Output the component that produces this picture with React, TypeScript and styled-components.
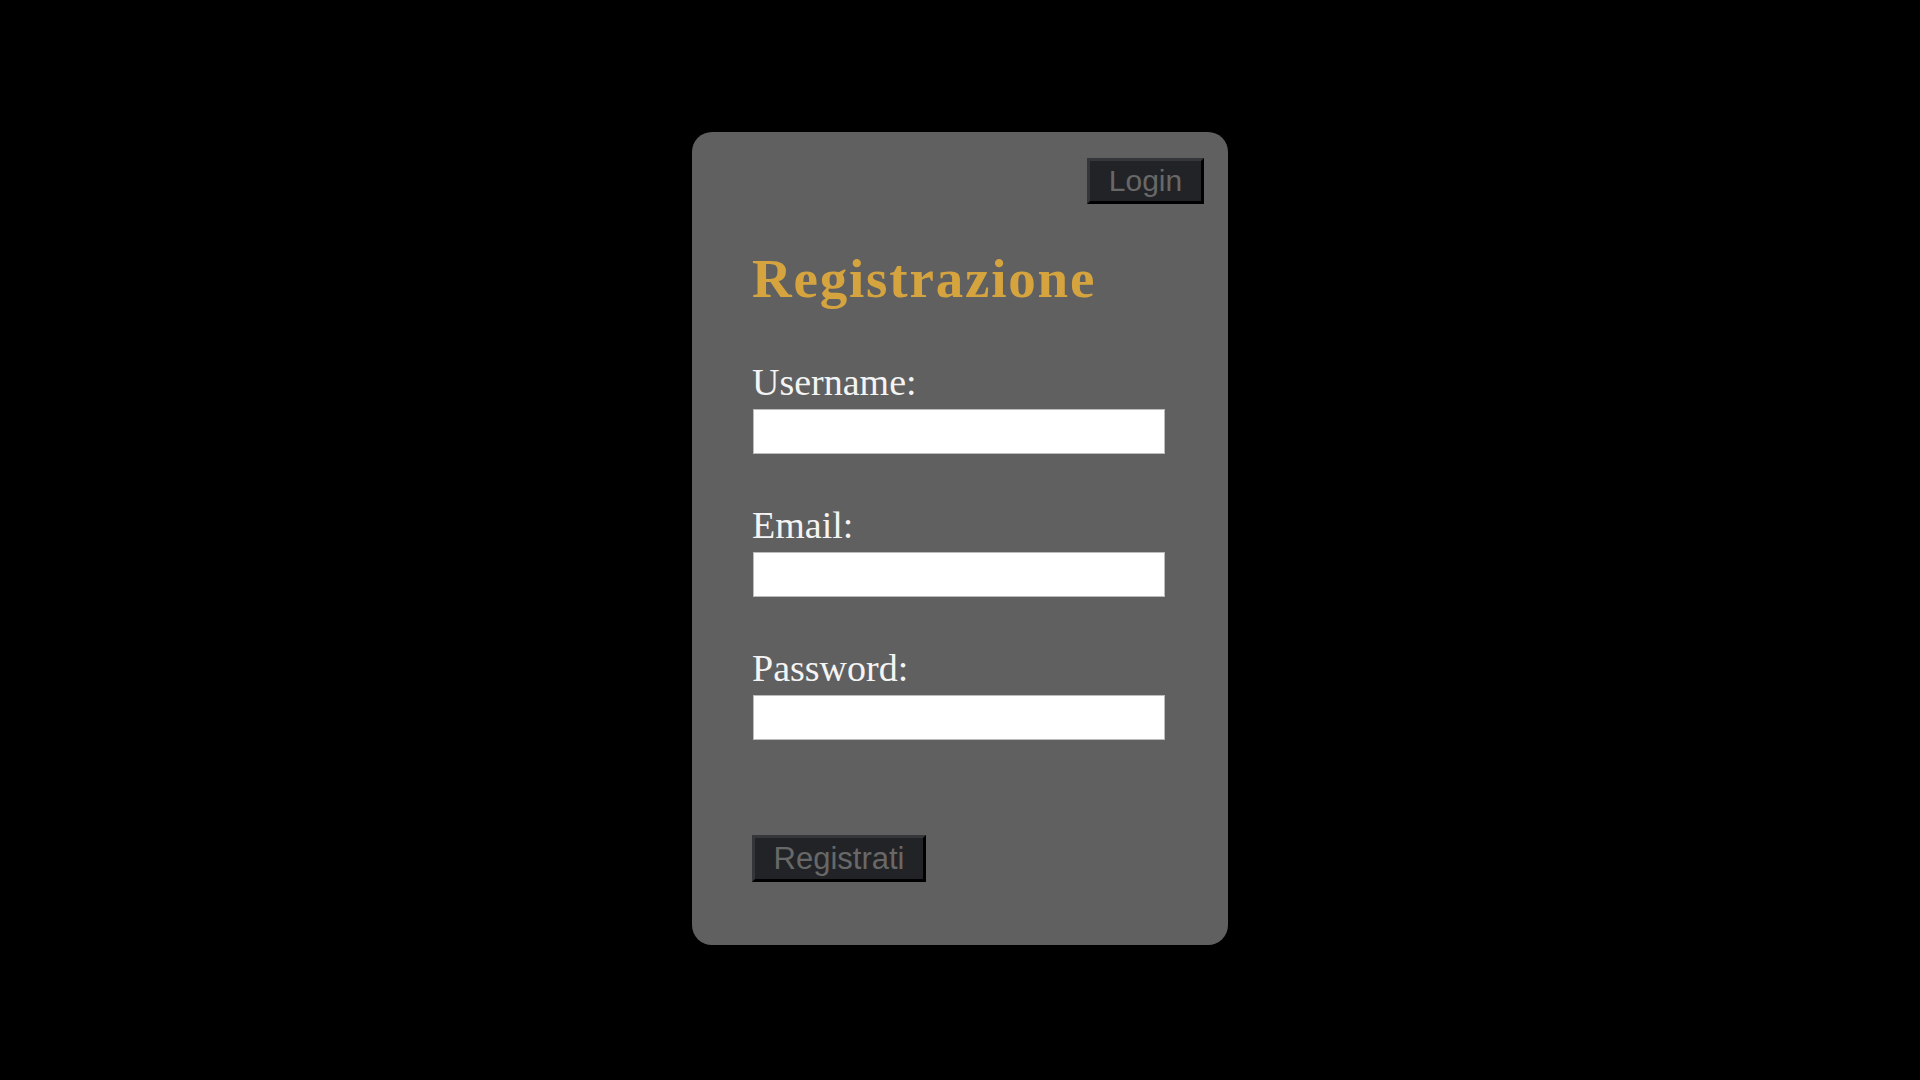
import styled, { createGlobalStyle } from 'styled-components'

const GlobalStyle = createGlobalStyle`
  html, body {
    margin: 0;
    padding: 0;
    background: #000;
  }
  body {
    font-family: "Liberation Serif", "Times New Roman", serif;
  }
`

const Page = styled.div`
  min-height: 100vh;
  display: flex;
  align-items: center;
  justify-content: center;
  padding-bottom: 4px;
  box-sizing: border-box;
`

const Card = styled.div`
  width: 536px;
  box-sizing: border-box;
  background: #606060;
  border-radius: 20px;
  padding: 26px 24px 63px 60px;
  display: flex;
  flex-direction: column;
`

const TopBar = styled.div`
  display: flex;
  justify-content: flex-end;
`

const DarkButton = styled.button<{ $width: number }>`
  width: ${(p) => p.$width}px;
  height: 46px;
  box-sizing: border-box;
  padding: 0;
  background: #222326;
  color: #686868;
  font-family: "Liberation Sans", Arial, sans-serif;
  font-size: 30px;
  line-height: 1;
  border: 3px solid;
  border-color: #35363a #000 #000 #35363a;
  cursor: pointer;
`

const Title = styled.h1`
  margin: 48px 0 0;
  font-family: "Liberation Serif", "Times New Roman", serif;
  font-size: 55px;
  line-height: 54px;
  font-weight: bold;
  letter-spacing: 1.8px;
  color: #d6a43e;
`

const Form = styled.form`
  margin-top: 57px;
  display: flex;
  flex-direction: column;
  gap: 52px;
`

const Field = styled.div`
  display: flex;
  flex-direction: column;
`

const Label = styled.label`
  font-size: 38px;
  line-height: 38px;
  color: #f4f4f4;
  margin-bottom: 8px;
`

const Input = styled.input`
  width: 412px;
  height: 45px;
  box-sizing: border-box;
  border: 1px solid #bcbcbc;
  background: #fff;
  margin: 0 0 0 1px;
  outline: none;
`

const Submit = styled(DarkButton)`
  margin-top: 95px;
  height: 47px;
  align-self: flex-start;
  font-size: 31px;
`

const fields = [
  { id: 'username', label: 'Username:', type: 'text' },
  { id: 'email', label: 'Email:', type: 'email' },
  { id: 'password', label: 'Password:', type: 'password' },
]

function App() {
  return (
    <>
      <GlobalStyle />
      <Page>
        <Card>
          <TopBar>
            <DarkButton $width={117}>Login</DarkButton>
          </TopBar>
          <Title>Registrazione</Title>
          <Form onSubmit={(e) => e.preventDefault()}>
            {fields.map((f) => (
              <Field key={f.id}>
                <Label htmlFor={f.id}>{f.label}</Label>
                <Input id={f.id} type={f.type} />
              </Field>
            ))}
          </Form>
          <Submit $width={174} type="button">
            Registrati
          </Submit>
        </Card>
      </Page>
    </>
  )
}

export default App
